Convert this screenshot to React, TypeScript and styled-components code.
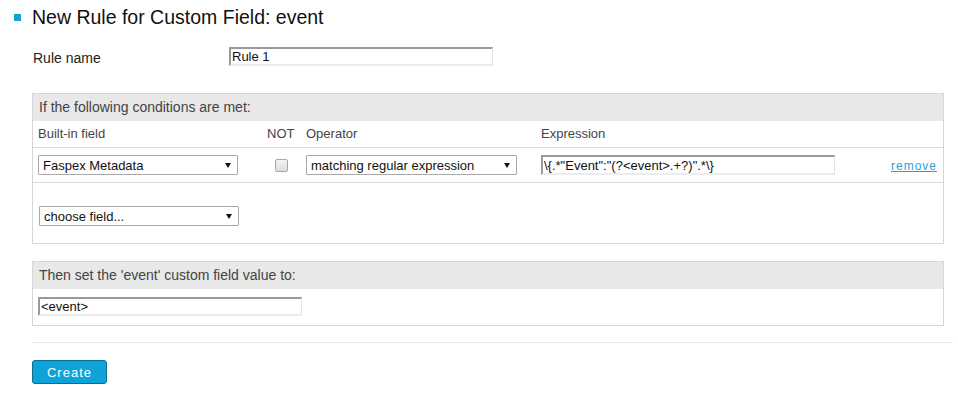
import * as React from "react";
import styled, { createGlobalStyle } from "styled-components";

const GlobalStyle = createGlobalStyle`
  html, body {
    margin: 0;
    padding: 0;
    background: #ffffff;
  }
  body {
    font-family: "Liberation Sans", Arial, sans-serif;
    color: #222;
  }
`;

const Page = styled.div`
  width: 958px;
  padding-top: 5px;
  box-sizing: border-box;
`;

const Title = styled.h1`
  display: flex;
  align-items: center;
  gap: 11px;
  margin: 0 0 0 14px;
  font-size: 19.5px;
  font-weight: normal;
  line-height: 24px;
  color: #111;
`;

const Bullet = styled.span`
  display: block;
  width: 7px;
  height: 7px;
  background: #1a9fd9;
  margin-top: 1px;
`;

const Content = styled.div`
  margin-left: 32px;
  width: 912px;
`;

const RuleRow = styled.div`
  display: flex;
  align-items: flex-start;
  margin-top: 18px;
  height: 19px;
`;

const Label = styled.label`
  width: 197px;
  padding-top: 3px;
  padding-left: 1px;
  box-sizing: border-box;
  font-size: 14px;
  line-height: 16px;
  color: #222;
`;

const TextInput = styled.input<{ w: number }>`
  box-sizing: border-box;
  width: ${(p) => p.w}px;
  height: ${(p) => (p.w > 290 ? 20 : 19)}px;
  margin: 0;
  padding: 0 1px;
  border-style: solid;
  border-width: 2px 1px 2px 2px;
  border-color: #9a9a9a #e4e4e4 #ececec #9a9a9a;
  font-family: "Liberation Sans", Arial, sans-serif;
  font-size: 13px;
  color: #111;
  outline: none;
  background: #fff;
`;

const Box = styled.section<{ top: number }>`
  margin-top: ${(p) => p.top}px;
  border: 1px solid #d6d6d6;
`;

const BoxHeader = styled.div`
  height: 27px;
  line-height: 27px;
  background: #e8e8e8;
  padding-left: 6px;
  font-size: 14px;
  color: #444;
`;

const Grid = styled.div<{ h: number }>`
  display: grid;
  grid-template-columns: 229px 39px 235px 1fr auto;
  align-items: center;
  height: ${(p) => p.h}px;
  padding: 0 6px 0 5px;
  border-bottom: 1px solid #dadada;
`;

const ColHead = styled.div`
  font-size: 13px;
  line-height: 26px;
  color: #444;
`;

const NotCell = styled.div`
  width: 28px;
  display: flex;
  justify-content: center;
`;

const Check = styled.input`
  appearance: none;
  width: 13px;
  height: 13px;
  margin: 1px 0 0;
  border: 1px solid #a8a8a8;
  border-radius: 2px;
  background: linear-gradient(#f4f4f4, #dcdcdc);
`;

const SelectWrap = styled.div<{ w: number }>`
  position: relative;
  width: ${(p) => p.w}px;
  height: 20px;

  &::after {
    content: "";
    position: absolute;
    right: 7px;
    top: 8px;
    border-left: 3px solid transparent;
    border-right: 3px solid transparent;
    border-top: 5px solid #111;
    pointer-events: none;
  }
`;

const Select = styled.select`
  appearance: none;
  box-sizing: border-box;
  width: 100%;
  height: 20px;
  margin: 0;
  padding: 0 0 0 4px;
  border: 1px solid #a9a9a9;
  border-radius: 1px;
  background: #fff;
  font-family: "Liberation Sans", Arial, sans-serif;
  font-size: 13px;
  color: #111;
`;

const RemoveLink = styled.a`
  font-size: 12px;
  letter-spacing: 1px;
  color: #2d9fd8;
  text-decoration: underline;
  cursor: pointer;
  margin-top: 2px;
`;

const AddRow = styled.div`
  padding: 23px 0 17px 6px;
`;

const BoxBody = styled.div`
  padding: 8px 5px 9px;
`;

const Divider = styled.hr`
  margin: 16px 0 0 32px;
  width: 921px;
  border: 0;
  border-top: 1px solid #e6e6e6;
  height: 0;
`;

const Button = styled.button`
  display: block;
  margin: 17px 0 0 32px;
  width: 75px;
  height: 24px;
  padding: 0;
  border: 1px solid #0c6f91;
  border-radius: 3px;
  background: #0fa2d9;
  color: #fff;
  font-family: "Liberation Sans", Arial, sans-serif;
  font-size: 13px;
  letter-spacing: 1px;
  cursor: pointer;
`;

export default function App() {
  return (
    <>
      <GlobalStyle />
      <Page>
        <Title>
          <Bullet />
          New Rule for Custom Field: event
        </Title>
        <Content>
          <RuleRow>
            <Label>Rule name</Label>
            <TextInput w={264} defaultValue="Rule 1" />
          </RuleRow>

          <Box top={27}>
            <BoxHeader>If the following conditions are met:</BoxHeader>
            <Grid h={26}>
              <ColHead>Built-in field</ColHead>
              <ColHead>NOT</ColHead>
              <ColHead>Operator</ColHead>
              <ColHead>Expression</ColHead>
              <span />
            </Grid>
            <Grid h={34}>
              <SelectWrap w={200}>
                <Select defaultValue="faspex">
                  <option value="faspex">Faspex Metadata</option>
                </Select>
              </SelectWrap>
              <NotCell>
                <Check type="checkbox" />
              </NotCell>
              <SelectWrap w={211}>
                <Select defaultValue="regex">
                  <option value="regex">matching regular expression</option>
                </Select>
              </SelectWrap>
              <TextInput
                w={294}
                defaultValue={'\\{.*"Event":"(?<event>.+?)".*\\}'}
              />
              <RemoveLink>remove</RemoveLink>
            </Grid>
            <AddRow>
              <SelectWrap w={200}>
                <Select defaultValue="">
                  <option value="">choose field...</option>
                </Select>
              </SelectWrap>
            </AddRow>
          </Box>

          <Box top={17}>
            <BoxHeader>Then set the 'event' custom field value to:</BoxHeader>
            <BoxBody>
              <TextInput w={264} defaultValue="<event>" />
            </BoxBody>
          </Box>
        </Content>
        <Divider />
        <Button>Create</Button>
      </Page>
    </>
  );
}
